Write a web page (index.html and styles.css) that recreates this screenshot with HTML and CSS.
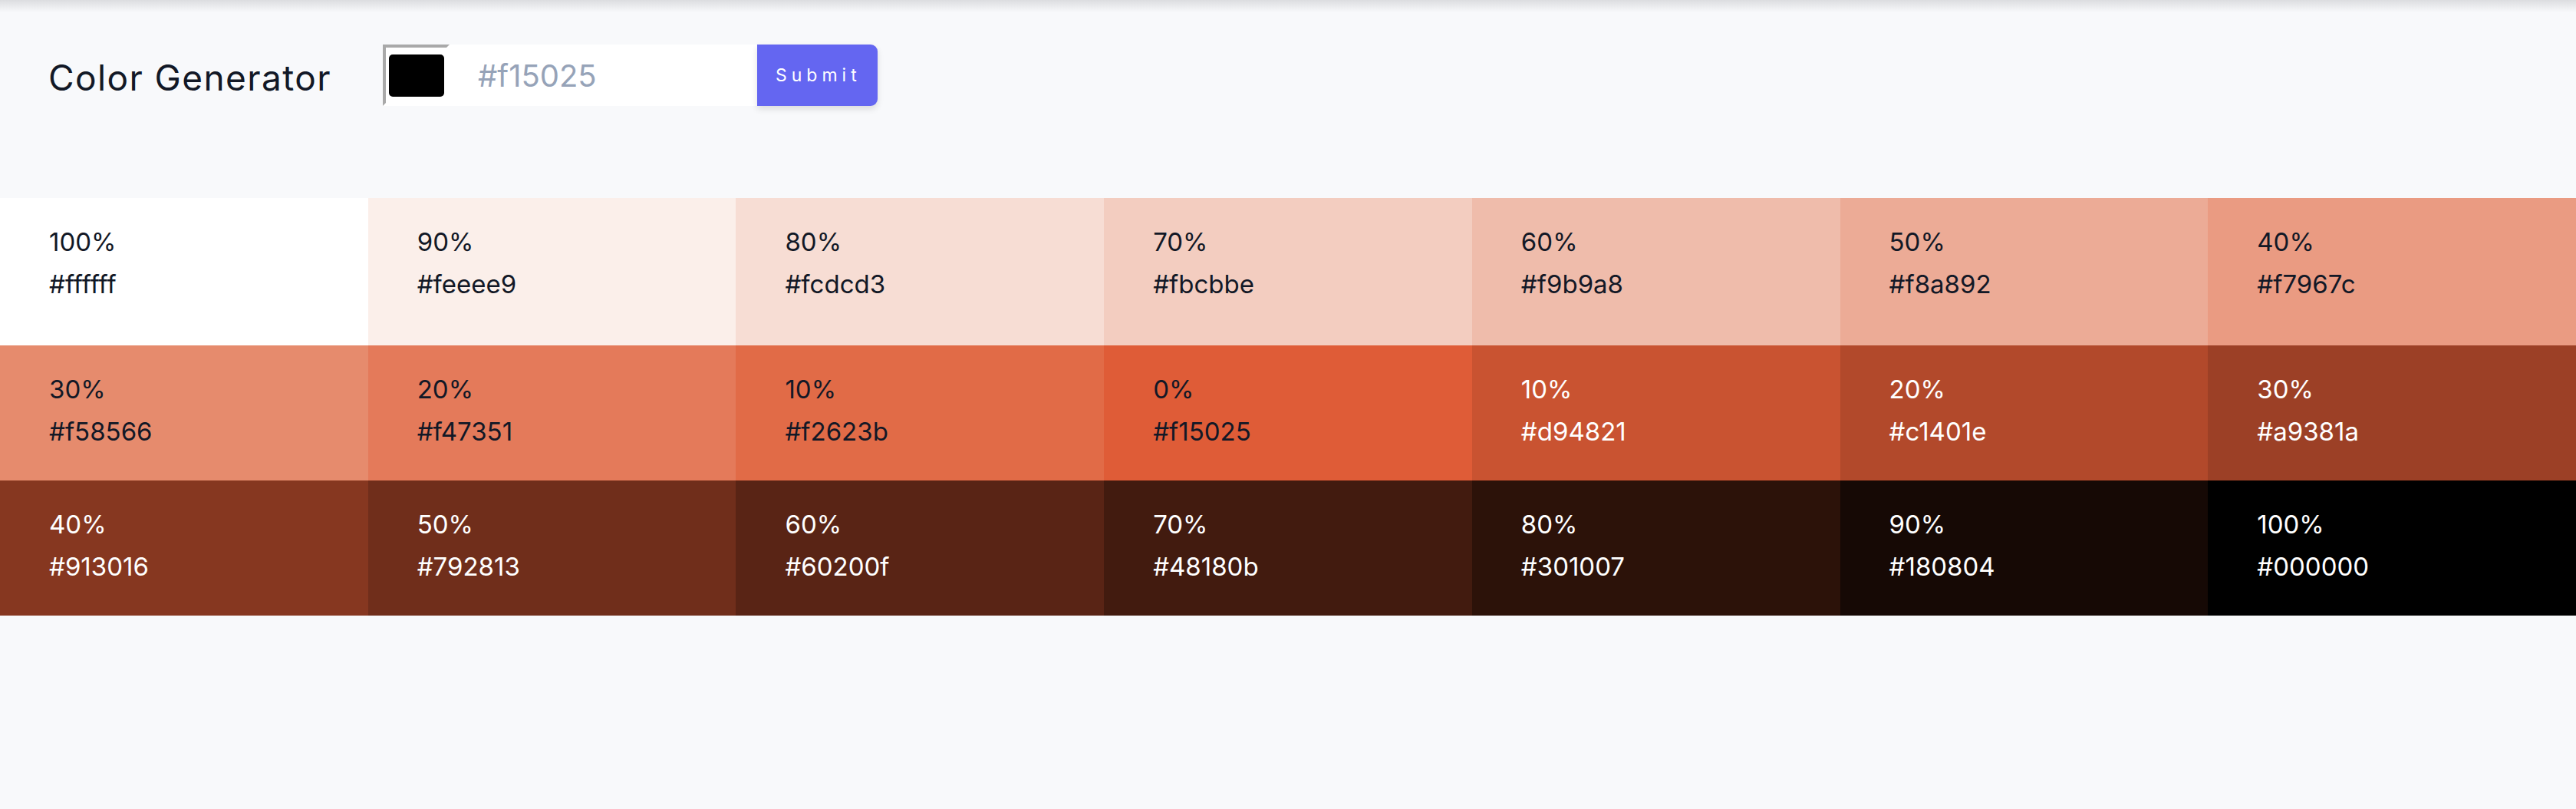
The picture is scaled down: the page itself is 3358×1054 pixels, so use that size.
FILE: index.html
```html
<!DOCTYPE html>
<html lang="en">
<head>
<meta charset="utf-8">
<title>Color Generator</title>
<link rel="stylesheet" href="styles.css">
</head>
<body>
<section class="container">
  <h3 class="title">Color Generator</h3>
  <form class="color-form">
    <span class="color-picker"><span class="swatch"></span></span>
    <input class="hex-input" type="text" placeholder="#f15025">
    <button class="btn" type="submit">Submit</button>
  </form>
</section>
<section class="colors">
  <article class="color" data-hex="#ffffff"><p class="percent">100%</p><p class="hex">#ffffff</p></article>
  <article class="color" data-hex="#feeee9"><p class="percent">90%</p><p class="hex">#feeee9</p></article>
  <article class="color" data-hex="#fcdcd3"><p class="percent">80%</p><p class="hex">#fcdcd3</p></article>
  <article class="color" data-hex="#fbcbbe"><p class="percent">70%</p><p class="hex">#fbcbbe</p></article>
  <article class="color" data-hex="#f9b9a8"><p class="percent">60%</p><p class="hex">#f9b9a8</p></article>
  <article class="color" data-hex="#f8a892"><p class="percent">50%</p><p class="hex">#f8a892</p></article>
  <article class="color" data-hex="#f7967c"><p class="percent">40%</p><p class="hex">#f7967c</p></article>
  <article class="color" data-hex="#f58566"><p class="percent">30%</p><p class="hex">#f58566</p></article>
  <article class="color" data-hex="#f47351"><p class="percent">20%</p><p class="hex">#f47351</p></article>
  <article class="color" data-hex="#f2623b"><p class="percent">10%</p><p class="hex">#f2623b</p></article>
  <article class="color" data-hex="#f15025"><p class="percent">0%</p><p class="hex">#f15025</p></article>
  <article class="color light" data-hex="#d94821"><p class="percent">10%</p><p class="hex">#d94821</p></article>
  <article class="color light" data-hex="#c1401e"><p class="percent">20%</p><p class="hex">#c1401e</p></article>
  <article class="color light" data-hex="#a9381a"><p class="percent">30%</p><p class="hex">#a9381a</p></article>
  <article class="color light" data-hex="#913016"><p class="percent">40%</p><p class="hex">#913016</p></article>
  <article class="color light" data-hex="#792813"><p class="percent">50%</p><p class="hex">#792813</p></article>
  <article class="color light" data-hex="#60200f"><p class="percent">60%</p><p class="hex">#60200f</p></article>
  <article class="color light" data-hex="#48180b"><p class="percent">70%</p><p class="hex">#48180b</p></article>
  <article class="color light" data-hex="#301007"><p class="percent">80%</p><p class="hex">#301007</p></article>
  <article class="color light" data-hex="#180804"><p class="percent">90%</p><p class="hex">#180804</p></article>
  <article class="color light" data-hex="#000000"><p class="percent">100%</p><p class="hex">#000000</p></article>
</section>
<script src="script.js"></script>
</body>
</html>
```

FILE: styles.css
```css
* {
  box-sizing: border-box;
  margin: 0;
  padding: 0;
}

body {
  font-family: Inter, "Noto Sans", sans-serif;
  background: linear-gradient(#dcdde0, #f8f9fb 16px) no-repeat, #f8f9fb;
  min-height: 1054px;
  color: #121826;
}

.container {
  display: flex;
  align-items: flex-start;
  height: 258px;
  padding: 58px 0 0 63px;
}

.title {
  width: 436px;
  font-size: 46px;
  font-weight: 400;
  letter-spacing: 1.4px;
  line-height: 80px;
  padding-top: 3px;
  color: #121826;
}

.color-form {
  display: flex;
  height: 80px;
}

.color-picker {
  display: flex;
  align-items: center;
  justify-content: center;
  width: 87px;
  height: 80px;
  background: #fff;
  border-style: solid;
  border-width: 4px;
  border-color: #a9a9a9 #fff #fff #a9a9a9;
}

.swatch {
  width: 72px;
  height: 55px;
  background: #000;
  border-radius: 5px;
}

.hex-input {
  width: 401px;
  height: 80px;
  border: none;
  outline: none;
  background: #fff;
  padding-left: 37px;
  font-family: Inter, "Noto Sans", sans-serif;
  font-size: 40px;
  color: #121826;
}

.hex-input::placeholder {
  color: #96a3b8;
}

.btn {
  width: 157px;
  height: 80px;
  border: none;
  background: #6466f1;
  color: #fff;
  font-family: Inter, "Noto Sans", sans-serif;
  font-size: 23px;
  letter-spacing: 6px;
  text-align: left;
  padding-left: 24px;
  border-radius: 0 9px 9px 0;
  box-shadow: 0 4px 8px rgba(0, 0, 0, 0.12);
}

.colors {
  display: grid;
  grid-template-columns: repeat(7, 1fr);
  grid-template-rows: 192px 176px 176px;
}

.color {
  padding: 30px 0 0 64px;
  font-size: 33px;
  color: #121826;
}

.color p {
  line-height: 55px;
}

.color.light {
  color: #fff;
}
```

FILE: script.js
```js
(function () {
  function lin(c) {
    c = c / 255;
    return c <= 0.04045 ? c / 12.92 : Math.pow((c + 0.055) / 1.055, 2.4);
  }
  function gam(c) {
    c = Math.max(0, Math.min(1, c));
    return c <= 0.0031308 ? 12.92 * c : 1.055 * Math.pow(c, 1 / 2.4) - 0.055;
  }
  function shown(hex) {
    var r = lin(parseInt(hex.substr(1, 2), 16));
    var g = lin(parseInt(hex.substr(3, 2), 16));
    var b = lin(parseInt(hex.substr(5, 2), 16));
    var R = 0.8224621 * r + 0.177538 * g;
    var G = 0.0331941 * r + 0.9668058 * g;
    var B = 0.0170827 * r + 0.0723974 * g + 0.9105199 * b;
    return 'rgb(' + Math.round(gam(R) * 255) + ',' + Math.round(gam(G) * 255) + ',' + Math.round(gam(B) * 255) + ')';
  }
  var cells = document.querySelectorAll('.color');
  for (var i = 0; i < cells.length; i++) {
    cells[i].style.background = shown(cells[i].getAttribute('data-hex'));
  }
})();
```
